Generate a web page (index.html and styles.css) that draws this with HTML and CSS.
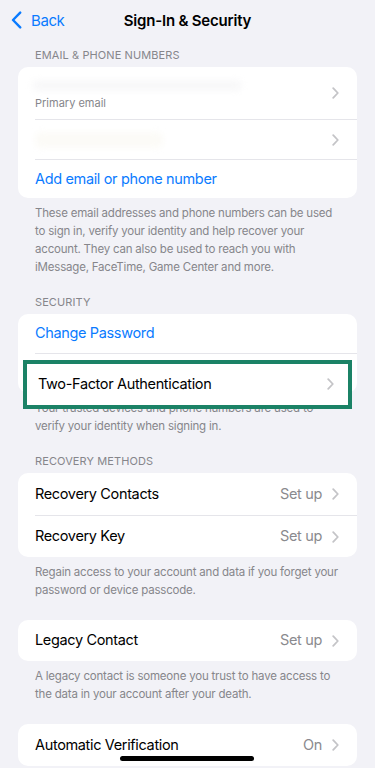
FILE: index.html
```html
<!DOCTYPE html>
<html lang="en">
<head>
<meta charset="utf-8">
<meta name="viewport" content="width=device-width, initial-scale=1">
<title>Sign-In &amp; Security</title>
<link rel="stylesheet" href="styles.css">
</head>
<body>
<div class="screen">
  <header class="nav">
    <a class="back" href="#">
      <svg class="back-icon" width="11" height="18" viewBox="0 0 11 18" aria-hidden="true"><path d="M9.2 1.6 L2 9 L9.2 16.4" fill="none" stroke="#0a7bff" stroke-width="2.4" stroke-linecap="round" stroke-linejoin="round"/></svg>
      <span>Back</span>
    </a>
    <h1 class="title">Sign-In &amp; Security</h1>
    <span class="nav-spacer"></span>
  </header>

  <section class="group">
    <h2 class="group-header">EMAIL &amp; PHONE NUMBERS</h2>
    <div class="card">
      <div class="row row-tall">
        <div class="row-inner">
          <div class="stack">
            <span class="blurred blurred-long"></span>
            <span class="sub">Primary email</span>
          </div>
          <svg class="chev" width="7" height="12" viewBox="0 0 7 12" aria-hidden="true"><path d="M1.2 1.2 L5.8 6 L1.2 10.8" fill="none" stroke="#c4c4c7" stroke-width="1.8" stroke-linecap="round" stroke-linejoin="round"/></svg>
        </div>
      </div>
      <div class="row row-40">
        <div class="row-inner sep">
          <span class="blurred blurred-short"></span>
          <svg class="chev" width="7" height="12" viewBox="0 0 7 12" aria-hidden="true"><path d="M1.2 1.2 L5.8 6 L1.2 10.8" fill="none" stroke="#c4c4c7" stroke-width="1.8" stroke-linecap="round" stroke-linejoin="round"/></svg>
        </div>
      </div>
      <div class="row row-39">
        <div class="row-inner sep">
          <span class="label link">Add email or phone number</span>
        </div>
      </div>
    </div>
    <p class="group-footer">These email addresses and phone numbers can be used to sign in, verify your identity and help recover your account. They can also be used to reach you with iMessage, FaceTime, Game Center and more.</p>
  </section>

  <section class="group">
    <h2 class="group-header">SECURITY</h2>
    <div class="card">
      <div class="row row-39">
        <div class="row-inner">
          <span class="label link">Change Password</span>
        </div>
      </div>
      <div class="row row-40 row-highlighted">
        <div class="row-inner sep"></div>
        <div class="highlight-box">
          <span class="label">Two-Factor Authentication</span>
          <svg class="chev" width="7" height="12" viewBox="0 0 7 12" aria-hidden="true"><path d="M1.2 1.2 L5.8 6 L1.2 10.8" fill="none" stroke="#c4c4c7" stroke-width="1.8" stroke-linecap="round" stroke-linejoin="round"/></svg>
        </div>
      </div>
    </div>
    <p class="group-footer">Your trusted devices and phone numbers are used to verify your identity when signing in.</p>
  </section>

  <section class="group">
    <h2 class="group-header">RECOVERY METHODS</h2>
    <div class="card">
      <div class="row row-42">
        <div class="row-inner">
          <span class="label">Recovery Contacts</span>
          <span class="value">Set up</span>
          <svg class="chev" width="7" height="12" viewBox="0 0 7 12" aria-hidden="true"><path d="M1.2 1.2 L5.8 6 L1.2 10.8" fill="none" stroke="#c4c4c7" stroke-width="1.8" stroke-linecap="round" stroke-linejoin="round"/></svg>
        </div>
      </div>
      <div class="row row-42">
        <div class="row-inner sep">
          <span class="label">Recovery Key</span>
          <span class="value">Set up</span>
          <svg class="chev" width="7" height="12" viewBox="0 0 7 12" aria-hidden="true"><path d="M1.2 1.2 L5.8 6 L1.2 10.8" fill="none" stroke="#c4c4c7" stroke-width="1.8" stroke-linecap="round" stroke-linejoin="round"/></svg>
        </div>
      </div>
    </div>
    <p class="group-footer">Regain access to your account and data if you forget your password or device passcode.</p>
  </section>

  <section class="group group-plain">
    <div class="card">
      <div class="row row-41">
        <div class="row-inner">
          <span class="label">Legacy Contact</span>
          <span class="value">Set up</span>
          <svg class="chev" width="7" height="12" viewBox="0 0 7 12" aria-hidden="true"><path d="M1.2 1.2 L5.8 6 L1.2 10.8" fill="none" stroke="#c4c4c7" stroke-width="1.8" stroke-linecap="round" stroke-linejoin="round"/></svg>
        </div>
      </div>
    </div>
    <p class="group-footer">A legacy contact is someone you trust to have access to the data in your account after your death.</p>
  </section>

  <section class="group group-plain">
    <div class="card">
      <div class="row row-42">
        <div class="row-inner">
          <span class="label">Automatic Verification</span>
          <span class="value">On</span>
          <svg class="chev" width="7" height="12" viewBox="0 0 7 12" aria-hidden="true"><path d="M1.2 1.2 L5.8 6 L1.2 10.8" fill="none" stroke="#c4c4c7" stroke-width="1.8" stroke-linecap="round" stroke-linejoin="round"/></svg>
        </div>
      </div>
    </div>
  </section>

  <div class="home-indicator"></div>
</div>
</body>
</html>
```

FILE: styles.css
```css
* { box-sizing: border-box; }

html, body {
  margin: 0;
  padding: 0;
  background: #f2f2f7;
}

body {
  font-family: Inter, "Noto Sans", "Liberation Sans", sans-serif;
  color: #000;
  -webkit-font-smoothing: antialiased;
}

.screen {
  position: relative;
  width: 375px;
  height: 768px;
  overflow: hidden;
}

/* Navigation bar */
.nav {
  height: 40px;
  display: grid;
  grid-template-columns: 1fr auto 1fr;
  align-items: center;
}

.back {
  display: flex;
  align-items: center;
  gap: 9px;
  padding-left: 11px;
  color: #0a7bff;
  text-decoration: none;
  font-size: 15px;
  letter-spacing: -0.4px;
}

.back-icon { display: block; }

.title {
  margin: 0;
  font-size: 15px;
  font-weight: 600;
  letter-spacing: -0.2px;
}

/* Groups */
.group { margin-top: 19px; }
.group:first-of-type { margin-top: 8px; }
.group-plain { margin-top: 21px; }

.group-header {
  margin: 0 0 5px;
  padding: 0 35px;
  font-size: 11px;
  line-height: 14px;
  font-weight: 400;
  color: #86868b;
  letter-spacing: 0.1px;
}

.card {
  margin: 0 18px;
  background: #fff;
  border-radius: 10px;
}

.row {
  padding-left: 17px;
}

.row-inner {
  height: 100%;
  display: flex;
  align-items: center;
  padding-right: 18px;
}

.row-inner.sep { border-top: 1px solid #e5e5ea; }

.row-tall { height: 52px; }
.row-39 { height: 39px; }
.row-40 { height: 40px; }
.row-41 { height: 41px; }
.row-42 { height: 42px; }

.label {
  flex: 1;
  font-size: 14.5px;
  line-height: 18px;
  padding-bottom: 1px;
  letter-spacing: -0.35px;
}

.link { color: #0a7bff; }

.value {
  font-size: 14.5px;
  line-height: 18px;
  padding-bottom: 1px;
  letter-spacing: -0.35px;
  color: #8a8a8e;
  margin-right: 10px;
}

.chev { display: block; flex: none; }

.stack {
  flex: 1;
  display: flex;
  flex-direction: column;
  gap: 5px;
  padding-top: 4px;
}

.sub {
  font-size: 11px;
  line-height: 14px;
  color: #86868b;
}

.blurred {
  display: block;
  height: 11px;
  border-radius: 6px;
  background: #f8f8f9;
  filter: blur(3px);
}

.blurred-long { width: 210px; margin-left: -3px; }
.blurred-short { width: 128px; height: 16px; background: #fcfbf7; margin-right: auto; }

/* Highlight overlay */
.row-highlighted { position: relative; }

.highlight-box {
  position: absolute;
  z-index: 2;
  top: 7px;
  left: 5px;
  right: 5px;
  height: 49px;
  display: flex;
  align-items: center;
  padding: 0 14px 1px 11px;
  background: #fff;
  border: 4px solid #1b8266;
}

.group-footer {
  margin: 0;
  padding: 6px 35px 0;
  font-size: 11.5px;
  line-height: 18px;
  color: #86868b;
  letter-spacing: -0.2px;
}

.home-indicator {
  position: absolute;
  left: 120px;
  bottom: 7px;
  width: 134px;
  height: 5px;
  border-radius: 3px;
  background: #000;
}
```
